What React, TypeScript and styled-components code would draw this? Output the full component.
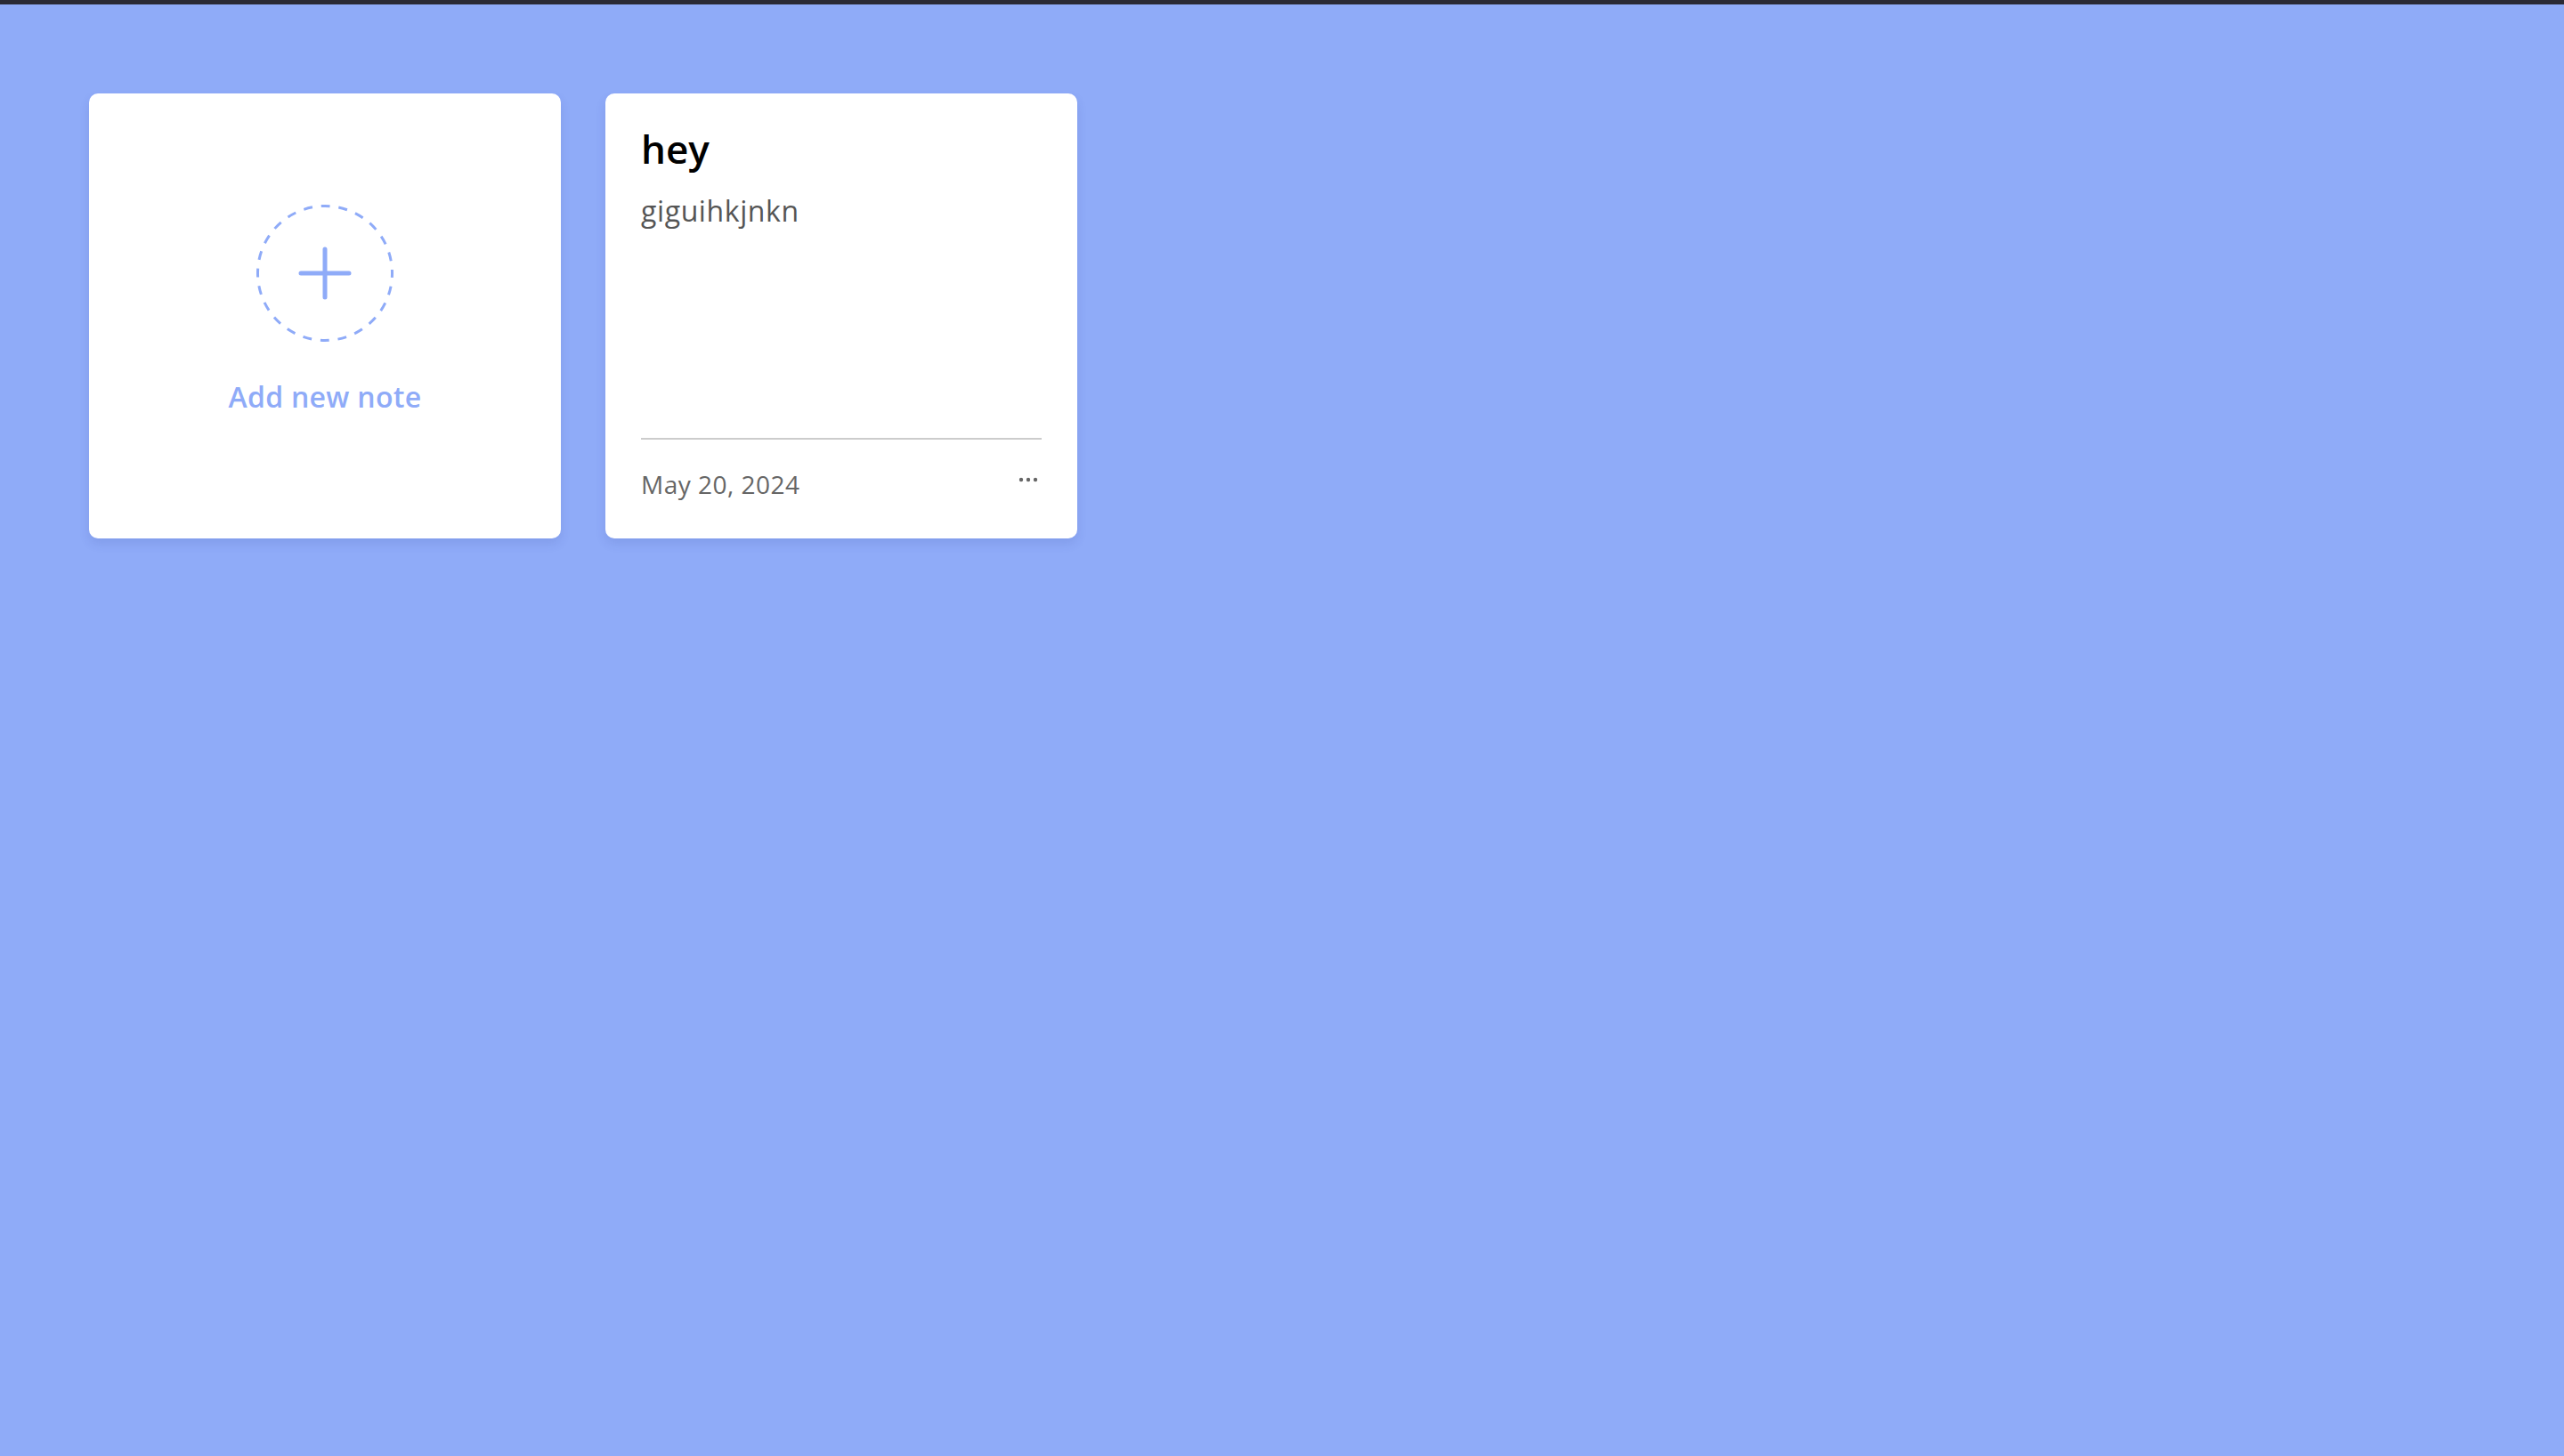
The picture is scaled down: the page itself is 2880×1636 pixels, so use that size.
import React from "react";
import styled, { createGlobalStyle } from "styled-components";

const Global = createGlobalStyle`
  html, body { margin: 0; padding: 0; }
  body {
    background: #8fabf8;
    font-family: "Open Sans", "Liberation Sans", sans-serif;
    min-height: 100vh;
  }
`;

const Shell = styled.div`
  min-height: 100vh;
  display: flex;
  flex-direction: column;
`;

const TopBar = styled.div`
  height: 5px;
  background: #2a2a35;
`;

const Grid = styled.main`
  display: grid;
  grid-template-columns: repeat(auto-fill, 530px);
  gap: 50px;
  padding: 100px;
`;

const Card = styled.div`
  height: 500px;
  box-sizing: border-box;
  background: #ffffff;
  border-radius: 10px;
  box-shadow: 0 6px 12px rgba(40, 60, 140, 0.12);
  display: flex;
  flex-direction: column;
`;

const AddCard = styled(Card)`
  align-items: center;
  justify-content: center;
  gap: 38px;
  padding-bottom: 10px;
  cursor: pointer;
`;

const CircleIcon = styled.svg`
  display: block;
  width: 154px;
  height: 154px;
`;

const AddLabel = styled.p`
  margin: 0;
  font-size: 32px;
  line-height: 48px;
  font-weight: 600;
  letter-spacing: 0.3px;
  color: #8fabf8;
`;

const NoteCard = styled(Card)`
  padding: 32px 40px 40px;
`;

const NoteBody = styled.div`
  flex: 1;
  display: flex;
  flex-direction: column;
  gap: 17px;
`;

const Title = styled.h2`
  margin: 0;
  font-size: 44px;
  line-height: 60px;
  font-weight: 600;
  color: #000;
`;

const Text = styled.p`
  margin: 0;
  font-size: 32px;
  line-height: 46px;
  letter-spacing: 0.6px;
  color: #555;
`;

const Footer = styled.div`
  border-top: 2px solid #cccccc;
  padding-top: 29px;
  display: flex;
  align-items: center;
  justify-content: space-between;
`;

const DateText = styled.span`
  font-size: 28px;
  line-height: 42px;
  letter-spacing: 0.5px;
  color: #666;
`;

const MoreButton = styled.button`
  border: none;
  background: none;
  padding: 0 4px;
  margin-top: -10px;
  display: flex;
  cursor: pointer;
`;

export default function App() {
  return (
    <Shell>
      <Global />
      <TopBar />
      <Grid>
        <AddCard>
          <CircleIcon viewBox="0 0 154 154">
            <circle
              cx="77"
              cy="77"
              r="75.5"
              fill="none"
              stroke="#8fabf8"
              strokeWidth="3"
              strokeDasharray="10 9.77"
              strokeDashoffset="5"
            />
            <path d="M77 50 V104 M50 77 H104" stroke="#8fabf8" strokeWidth="5" strokeLinecap="round" />
          </CircleIcon>
          <AddLabel>Add new note</AddLabel>
        </AddCard>
        <NoteCard>
          <NoteBody>
            <Title>hey</Title>
            <Text>giguihkjnkn</Text>
          </NoteBody>
          <Footer>
            <DateText>May 20, 2024</DateText>
            <MoreButton aria-label="more">
              <svg width="22" height="6" viewBox="0 0 22 6">
                <circle cx="3" cy="3" r="2.2" fill="#666" />
                <circle cx="11" cy="3" r="2.2" fill="#666" />
                <circle cx="19" cy="3" r="2.2" fill="#666" />
              </svg>
            </MoreButton>
          </Footer>
        </NoteCard>
      </Grid>
    </Shell>
  );
}
